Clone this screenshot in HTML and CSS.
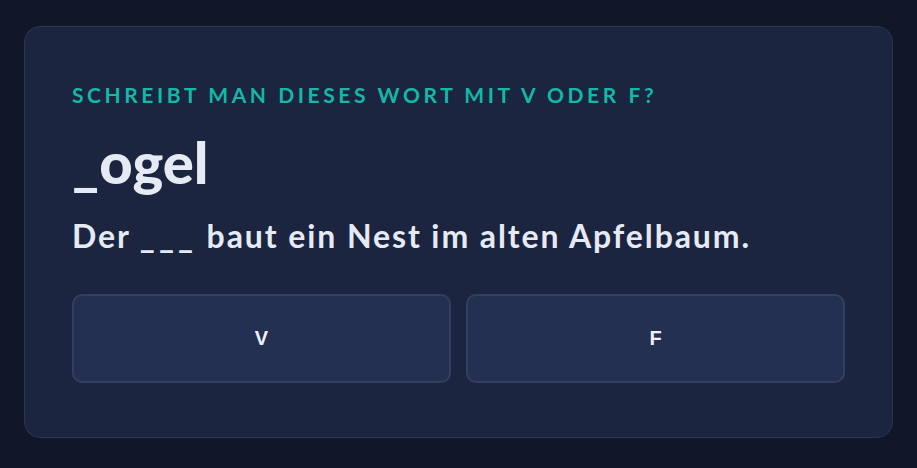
FILE: index.html
```html
<!DOCTYPE html>
<html lang="de">
  <head>
    <meta charset="UTF-8" />
    <meta name="viewport" content="width=device-width, initial-scale=1.0" />
    <title>V oder F</title>
    <link rel="stylesheet" href="styles.css">
  </head>
  <body>
    <!-- Quiz-Karte -->
    <div class="card">
      <div class="question">Schreibt man dieses Wort mit V oder F?</div>
      <div class="word">_ogel</div>
      <div class="sentence">Der <span class="blank">___</span> baut ein Nest im alten Apfelbaum.</div>

      <!-- Antworten -->
      <div class="answers">
        <button class="answer">V</button>
        <button class="answer">F</button>
      </div>
    </div>
  </body>
</html>
```

FILE: styles.css
```css
body {
  margin: 0;
  padding: 26px 24px 30px;
  background-color: #111729;
  font-family: Lato, "Noto Sans", sans-serif;
}
.card {
  background-color: #1b2540;
  border: 1px solid #2a3552;
  border-radius: 16px;
  padding: 54px 47px 54px;
}
.question {
  color: #14b8a6;
  font-size: 21px;
  font-weight: 700;
  text-transform: uppercase;
  letter-spacing: 0.17em;
  line-height: 28px;
}
.word {
  color: #e6eaf4;
  font-size: 58px;
  font-weight: 900;
  line-height: 64px;
  margin-top: 21px;
}
.sentence {
  color: #e6eaf4;
  font-size: 32px;
  font-weight: 700;
  letter-spacing: 1.9px;
  line-height: 40px;
  margin-top: 22px;
}
.blank {
  font-weight: 900;
  letter-spacing: 4px;
}
.answers {
  display: grid;
  grid-template-columns: 1fr 1fr;
  gap: 15px;
  margin-top: 38px;
}
.answer {
  height: 89px;
  background-color: #243052;
  border: 2px solid #343f60;
  border-radius: 10px;
  color: #eef1f8;
  font-family: "Liberation Sans", Arial, sans-serif;
  font-size: 20px;
  font-weight: 700;
}
```
